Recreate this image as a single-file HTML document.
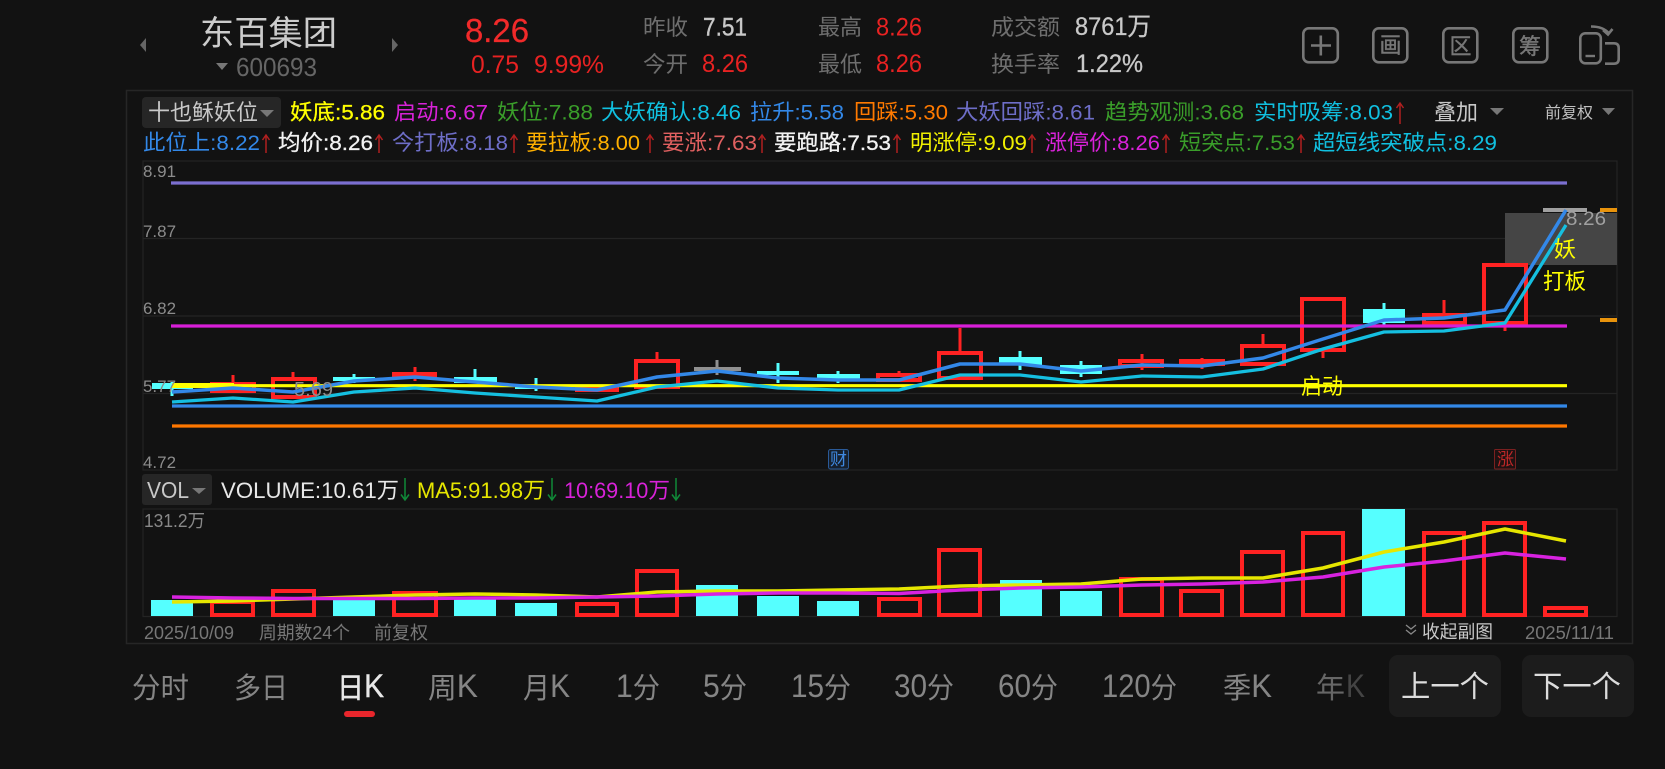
<!DOCTYPE html>
<html><head><meta charset="utf-8"><title>东百集团 600693</title>
<style>
html,body{margin:0;padding:0;background:#121212;width:1665px;height:769px;overflow:hidden}
svg{display:block}
text{font-family:"Liberation Sans","Noto Sans CJK SC",sans-serif}
</style></head><body>
<svg xmlns="http://www.w3.org/2000/svg" width="1665" height="769" viewBox="0 0 1665 769">
<rect width="1665" height="769" fill="#121212"/>

<!-- header -->
<path d="M140 45l6-7v14z M398 45l-6-7v14z" fill="#666"/>
<text x="200" y="45" font-size="34" fill="#cccccc" textLength="137" lengthAdjust="spacingAndGlyphs">东百集团</text>
<path d="M216 63h12l-6 7z" fill="#777"/>
<text x="236" y="76" font-size="26" fill="#666" textLength="81" lengthAdjust="spacingAndGlyphs">600693</text>
<text x="465" y="42" font-size="33" fill="#f12a2a" stroke="#f12a2a" stroke-width=".3" textLength="64" lengthAdjust="spacingAndGlyphs">8.26</text>
<text x="471" y="73" font-size="25" fill="#e82222" textLength="48" lengthAdjust="spacingAndGlyphs">0.75</text>
<text x="534" y="73" font-size="25" fill="#e82222" textLength="70" lengthAdjust="spacingAndGlyphs">9.99%</text>

<g font-size="22" fill="#6e6e6e">
<text x="643" y="35" textLength="45" lengthAdjust="spacingAndGlyphs">昨收</text>
<text x="643" y="72" textLength="45" lengthAdjust="spacingAndGlyphs">今开</text>
<text x="818" y="35" textLength="44" lengthAdjust="spacingAndGlyphs">最高</text>
<text x="818" y="72" textLength="44" lengthAdjust="spacingAndGlyphs">最低</text>
<text x="991" y="35" textLength="69" lengthAdjust="spacingAndGlyphs">成交额</text>
<text x="991" y="72" textLength="69" lengthAdjust="spacingAndGlyphs">换手率</text>
</g>
<g font-size="25">
<text x="703" y="35.500" fill="#c8c8c8" stroke="#c8c8c8" stroke-width=".4" textLength="44" lengthAdjust="spacingAndGlyphs">7.51</text>
<text x="702" y="72" fill="#e82222" textLength="46" lengthAdjust="spacingAndGlyphs">8.26</text>
<text x="876" y="35.500" fill="#e82222" textLength="46" lengthAdjust="spacingAndGlyphs">8.26</text>
<text x="876" y="72" fill="#e82222" textLength="46" lengthAdjust="spacingAndGlyphs">8.26</text>
<text x="1075" y="35" fill="#c8c8c8" stroke="#c8c8c8" stroke-width=".3" textLength="76" lengthAdjust="spacingAndGlyphs">8761万</text>
<text x="1076" y="72" fill="#c8c8c8" stroke="#c8c8c8" stroke-width=".3" textLength="67" lengthAdjust="spacingAndGlyphs">1.22%</text>
</g>

<!-- tool icons -->
<g fill="none" stroke="#777" stroke-width="2.600">
<rect x="1303.300" y="28.300" width="34.500" height="34" rx="5.500"/>
<rect x="1373.300" y="28.300" width="34" height="34" rx="5.500"/>
<rect x="1443.300" y="28.300" width="34" height="34" rx="5.500"/>
<rect x="1513.300" y="28.300" width="34" height="34" rx="5.500"/>
<path d="M1311 45.500h20M1320.800 35.500v20"/>
<rect x="1580.300" y="33.300" width="20.500" height="30" rx="5"/>
<path d="M1585.500 56h9.500" stroke-width="2.400"/>
<path d="M1591 26.500c7 0 14 2 18 7M1603 30l5 4.500 4.500-5.500"/>
<path d="M1605 43.300h9q4.700 0 4.700 4.700v11q0 4.700-4.700 4.700h-9"/>
</g>
<g fill="#777" stroke="#777" stroke-width=".4" text-anchor="middle" font-size="22">
<text x="1390.500" y="53">画</text>
<text x="1460.500" y="54">区</text>
<text x="1530" y="54">筹</text>
</g>

<!-- panel -->
<rect x="126.500" y="90.500" width="1506" height="553" fill="none" stroke="#262626" stroke-width="1.500"/>
<rect x="142" y="97" width="139" height="31" rx="4" fill="#262626"/>
<text x="148" y="120" font-size="22" fill="#c8c8c8" textLength="110" lengthAdjust="spacingAndGlyphs">十也稣妖位</text>
<path d="M260 110h14l-7 7z" fill="#777"/>

<g font-size="21.500" stroke-width=".3">
<text x="290" y="119.500" fill="#ffff00" stroke="#ffff00" textLength="95" lengthAdjust="spacingAndGlyphs">妖底:5.86</text>
<text x="394" y="119.500" fill="#d822d8" textLength="94" lengthAdjust="spacingAndGlyphs">启动:6.67</text>
<text x="497" y="119.500" fill="#3a9e2a" textLength="96" lengthAdjust="spacingAndGlyphs">妖位:7.88</text>
<text x="601" y="119.500" fill="#10c0e0" textLength="140" lengthAdjust="spacingAndGlyphs">大妖确认:8.46</text>
<text x="750" y="119.500" fill="#3388e8" textLength="94" lengthAdjust="spacingAndGlyphs">拉升:5.58</text>
<text x="854" y="119.500" fill="#ff7a00" textLength="94" lengthAdjust="spacingAndGlyphs">回踩:5.30</text>
<text x="956" y="119.500" fill="#6e6ec8" textLength="139" lengthAdjust="spacingAndGlyphs">大妖回踩:8.61</text>
<text x="1105" y="119.500" fill="#3a9e2a" textLength="139" lengthAdjust="spacingAndGlyphs">趋势观测:3.68</text>
<text x="1254" y="119.500" fill="#10c0e0" textLength="139" lengthAdjust="spacingAndGlyphs">实时吸筹:8.03</text>

<text x="143" y="150" fill="#3388e8" textLength="117" lengthAdjust="spacingAndGlyphs">此位上:8.22</text>
<text x="278" y="150" fill="#f2f2f2" stroke="#f2f2f2" textLength="95" lengthAdjust="spacingAndGlyphs">均价:8.26</text>
<text x="392" y="150" fill="#6e6ec8" textLength="116" lengthAdjust="spacingAndGlyphs">今打板:8.18</text>
<text x="526" y="150" fill="#ffb000" textLength="114" lengthAdjust="spacingAndGlyphs">要拉板:8.00</text>
<text x="662" y="150" fill="#e06060" textLength="95" lengthAdjust="spacingAndGlyphs">要涨:7.63</text>
<text x="774" y="150" fill="#f2f2f2" stroke="#f2f2f2" textLength="117" lengthAdjust="spacingAndGlyphs">要跑路:7.53</text>
<text x="910" y="150" fill="#f0f000" textLength="117" lengthAdjust="spacingAndGlyphs">明涨停:9.09</text>
<text x="1045" y="150" fill="#d822d8" textLength="115" lengthAdjust="spacingAndGlyphs">涨停价:8.26</text>
<text x="1179" y="150" fill="#3a9e2a" textLength="116" lengthAdjust="spacingAndGlyphs">短突点:7.53</text>
<text x="1313" y="150" fill="#10c0e0" textLength="184" lengthAdjust="spacingAndGlyphs">超短线突破点:8.29</text>
</g>
<g fill="none" stroke="#b02020" stroke-width="1.500">
<path d="M1400 103v21M1396.500 108l3.500-5 3.500 5"/>
<path d="M266 135v18M262.500 140l3.500-5 3.500 5M379 135v18M375.500 140l3.500-5 3.500 5M514 135v18M510.500 140l3.500-5 3.500 5M650 135v18M646.500 140l3.500-5 3.500 5M762 135v18M758.500 140l3.500-5 3.500 5M897 135v18M893.500 140l3.500-5 3.500 5M1032 135v18M1028.500 140l3.500-5 3.500 5M1166 135v18M1162.500 140l3.500-5 3.500 5M1301 135v18M1297.500 140l3.500-5 3.500 5"/>
</g>
<text x="1434" y="120" font-size="22" fill="#c8c8c8" textLength="44" lengthAdjust="spacingAndGlyphs">叠加</text>
<path d="M1490 108h14l-7 7zM1602 108h13l-6.500 7z" fill="#777"/>
<text x="1545" y="118" font-size="16" fill="#c0c0c0" textLength="48" lengthAdjust="spacingAndGlyphs">前复权</text>

<!-- main plot grid -->
<g fill="none" stroke="#242424" stroke-width="1.200">
<rect x="143" y="161" width="1474" height="309"/>
<path d="M143 238.500H1617M143 316H1617M143 393.500H1617"/>
<rect x="143" y="509" width="1474" height="107.500"/>
</g>

<!-- translucent box -->
<rect x="1505" y="213" width="112" height="52" fill="#454545"/>

<!-- candles -->
<g fill="#55ffff">
<rect x="152" y="383" width="41" height="6"/><rect x="170.500" y="382" width="3" height="14"/>
<rect x="333" y="377" width="42" height="4"/><rect x="352.500" y="374" width="3" height="9"/>
<rect x="454" y="377" width="43" height="6"/><rect x="473.500" y="369" width="3" height="9"/>
<rect x="515" y="386" width="42" height="3"/><rect x="534.500" y="378" width="3" height="13"/>
<rect x="757" y="371" width="42" height="4"/><rect x="776.500" y="363" width="3" height="20"/>
<rect x="817" y="374" width="43" height="5"/><rect x="836.500" y="371" width="3" height="12"/>
<rect x="999" y="357" width="43" height="8"/><rect x="1018.500" y="351" width="3" height="19"/>
<rect x="1060" y="365" width="42" height="9"/><rect x="1079.500" y="361" width="3" height="16"/>
<rect x="1363" y="309" width="42" height="14"/><rect x="1382.500" y="303" width="3" height="24"/>
</g>
<g fill="#909090">
<rect x="694" y="367" width="47" height="4"/><rect x="715.500" y="360" width="3" height="15"/>
<rect x="1543" y="208" width="44" height="4" fill="#a0a0a0"/>
</g>
<g fill="#ff2222">
<rect x="231.500" y="375" width="3" height="7"/>
<rect x="291.500" y="372" width="3" height="5"/>
<rect x="392" y="372" width="45" height="6"/><rect x="413.500" y="367" width="3" height="14"/>
<rect x="595.500" y="388" width="3" height="4"/>
<rect x="655.500" y="352" width="3" height="7"/>
<rect x="897.500" y="371" width="3" height="3"/>
<rect x="958.500" y="328" width="3" height="23"/>
<rect x="1140.500" y="354" width="3" height="16"/>
<rect x="1179" y="359" width="46" height="7"/><rect x="1200.500" y="358" width="3" height="11"/>
<rect x="1261.500" y="334" width="3" height="10"/>
<rect x="1321.500" y="352" width="3" height="6"/>
<rect x="1442.500" y="300" width="3" height="13"/>
<rect x="1503.500" y="325" width="3" height="6"/>
</g>
<g fill="none" stroke="#ff2222" stroke-width="4">
<rect x="212" y="384" width="42" height="7"/>
<rect x="273" y="379" width="42" height="18"/>
<rect x="577" y="388" width="40" height="2"/>
<rect x="636" y="361" width="42" height="26"/>
<rect x="878" y="375" width="42" height="5"/>
<rect x="939" y="353" width="42" height="25"/>
<rect x="1120" y="361" width="42" height="5"/>
<rect x="1242" y="346" width="42" height="18"/>
<rect x="1302" y="299" width="42" height="51"/>
<rect x="1424" y="315" width="41" height="8"/>
<rect x="1484" y="265" width="42" height="58"/>
</g>

<!-- horizontal indicator lines -->
<g stroke-width="3.200">
<path d="M171 183H1567" stroke="#7b6fd0"/>
<path d="M171 326H1567" stroke="#d81fd8"/>
<path d="M172 385.700H1567" stroke="#ffff00"/>
<path d="M172 406H1567" stroke="#3388e8"/>
<path d="M172 426H1567" stroke="#ff7700"/>
</g>
<rect x="172" y="383" width="62" height="5" fill="#ffff00"/>

<!-- moving lines -->
<polyline fill="none" stroke="#15bfe0" stroke-width="3.300" stroke-linejoin="round" points="172,402 233,398 293,402 354,392 415,388 475,393 536,397 597,401 657,387 717,381 778,388 838,390 899,390 960,375 1020,375 1081,382 1142,376 1202,377 1263,369 1323,349 1384,332 1444,331 1505,323 1566,225"/>
<polyline fill="none" stroke="#3388e8" stroke-width="3.500" stroke-linejoin="round" points="172,392 233,388 293,392 354,381 415,377 475,382 536,387 597,390 657,377 717,371 778,378 838,380 899,380 960,364 1020,364 1081,371 1142,365 1202,366 1263,358 1323,339 1384,320 1444,318 1505,310 1566,210"/>

<!-- overlay labels -->
<g font-size="17" fill="#8c8c8c">
<text x="143" y="177" textLength="33" lengthAdjust="spacingAndGlyphs">8.91</text>
<text x="143" y="237" textLength="33" lengthAdjust="spacingAndGlyphs">7.87</text>
<text x="143" y="314" textLength="33" lengthAdjust="spacingAndGlyphs">6.82</text>
<text x="143" y="392" textLength="33" lengthAdjust="spacingAndGlyphs">5.77</text>
<text x="143" y="468" textLength="33" lengthAdjust="spacingAndGlyphs">4.72</text>
</g>
<text x="294" y="396" font-size="20" fill="#8c8c8c" textLength="39" lengthAdjust="spacingAndGlyphs">5.69</text>
<text x="1566" y="225" font-size="19" fill="#a0a0a0" textLength="40" lengthAdjust="spacingAndGlyphs">8.26</text>
<g font-size="22" fill="#ffff00">
<text x="1554" y="257">妖</text>
<text x="1543" y="289" textLength="43" lengthAdjust="spacingAndGlyphs">打板</text>
<text x="1301" y="394" textLength="42" lengthAdjust="spacingAndGlyphs">启动</text>
</g>
<rect x="1600" y="208" width="17" height="4" fill="#e8930c"/>
<rect x="1600" y="318" width="17" height="4" fill="#e8930c"/>

<rect x="828.500" y="449.500" width="20" height="19.500" rx="2" fill="#16202e" stroke="#2a5a98"/>
<text x="830" y="465" font-size="17" fill="#3f88e0">财</text>
<rect x="1494.500" y="449.500" width="21" height="19.500" rx="1" fill="#1e1212" stroke="#7a2020"/>
<text x="1497" y="465" font-size="17" fill="#c02828">涨</text>

<!-- VOL header -->
<rect x="142" y="474" width="70" height="31" rx="3" fill="#262626"/>
<text x="147" y="498" font-size="23" fill="#c8c8c8" textLength="42" lengthAdjust="spacingAndGlyphs">VOL</text>
<path d="M192 488h14l-7 6z" fill="#777"/>
<g font-size="22">
<text x="221" y="498" fill="#e8e8e8" textLength="178" lengthAdjust="spacingAndGlyphs">VOLUME:10.61万</text>
<text x="417" y="498" fill="#e6e600" textLength="128" lengthAdjust="spacingAndGlyphs">MA5:91.98万</text>
<text x="564" y="498" fill="#d822d8" textLength="106" lengthAdjust="spacingAndGlyphs">10:69.10万</text>
</g>
<path d="M405 478v22M401 494.500l4 5.500 4-5.500M552 478v22M548 494.500l4 5.500 4-5.500M676 478v22M672 494.500l4 5.500 4-5.500" fill="none" stroke="#108a38" stroke-width="1.500"/>
<text x="144" y="527" font-size="18" fill="#888" textLength="61" lengthAdjust="spacingAndGlyphs">131.2万</text>

<!-- volume bars -->
<g fill="#55ffff">
<rect x="151" y="600" width="42" height="16"/>
<rect x="333" y="596" width="42" height="20"/>
<rect x="454" y="597" width="42" height="19"/>
<rect x="515" y="603" width="42" height="13"/>
<rect x="696" y="585" width="42" height="31"/>
<rect x="757" y="596" width="42" height="20"/>
<rect x="817" y="601" width="42" height="15"/>
<rect x="1000" y="580" width="42" height="36"/>
<rect x="1060" y="591" width="42" height="25"/>
<rect x="1362" y="509" width="43" height="107"/>
</g>
<g fill="none" stroke="#ff2222" stroke-width="4">
<rect x="212" y="602" width="41" height="13"/>
<rect x="273" y="591" width="41" height="24"/>
<rect x="394" y="593" width="42" height="22"/>
<rect x="577" y="604" width="40" height="11"/>
<rect x="637" y="571" width="40" height="44"/>
<rect x="879" y="599" width="41" height="16"/>
<rect x="939" y="550" width="41" height="65"/>
<rect x="1121" y="579" width="41" height="36"/>
<rect x="1181" y="591" width="41" height="24"/>
<rect x="1242" y="552" width="41" height="63"/>
<rect x="1303" y="533" width="40" height="82"/>
<rect x="1424" y="533" width="40" height="82"/>
<rect x="1484" y="523" width="41" height="92"/>
<rect x="1545" y="608" width="41" height="7"/>
</g>
<polyline fill="none" stroke="#e6e600" stroke-width="3.500" stroke-linejoin="round" points="172,602 233,601 293,599 354,597 415,595 475,594 536,595 597,597 657,592 717,591 778,591 838,590 899,589 960,586 1020,585 1081,584 1142,579 1202,578 1263,578 1323,568 1384,552 1444,542 1505,529 1566,541"/>
<polyline fill="none" stroke="#d822e0" stroke-width="3.500" stroke-linejoin="round" points="172,597 233,598 293,598.500 354,598.500 415,598.500 475,598 536,598 597,597 657,596 717,594 778,593 838,593 899,593.500 960,590 1020,588 1081,587 1142,585 1202,584 1263,582 1323,577 1384,567 1444,561 1505,553 1566,559"/>

<!-- footer of panel -->
<g font-size="18" fill="#777">
<text x="144" y="639" textLength="90" lengthAdjust="spacingAndGlyphs">2025/10/09</text>
<text x="259" y="639" textLength="91" lengthAdjust="spacingAndGlyphs">周期数24个</text>
<text x="374" y="639" textLength="54" lengthAdjust="spacingAndGlyphs">前复权</text>
<text x="1525" y="639" textLength="89" lengthAdjust="spacingAndGlyphs">2025/11/11</text>
</g>
<path d="M1406 625l5 4 5-4M1406 630l5 4 5-4" fill="none" stroke="#888" stroke-width="1.300"/>
<text x="1422" y="638" font-size="18" fill="#c8c8c8" textLength="71" lengthAdjust="spacingAndGlyphs">收起副图</text>

<!-- tabs -->
<g font-size="29" fill="#858585">
<text x="132" y="698" textLength="57" lengthAdjust="spacingAndGlyphs">分时</text>
<text x="234" y="698" textLength="54" lengthAdjust="spacingAndGlyphs">多日</text>
<text x="337" y="698" fill="#e8e8e8" stroke="#e8e8e8" stroke-width=".4" textLength="47" lengthAdjust="spacingAndGlyphs">日<tspan font-size="32" dy="-1">K</tspan></text>
<text x="428" y="698" textLength="50" lengthAdjust="spacingAndGlyphs">周<tspan font-size="32" dy="-1">K</tspan></text>
<text x="523" y="698" textLength="47" lengthAdjust="spacingAndGlyphs">月<tspan font-size="32" dy="-1">K</tspan></text>
<text x="616" y="698" textLength="44" lengthAdjust="spacingAndGlyphs"><tspan font-size="32" dy="-1">1</tspan><tspan dy="1">分</tspan></text>
<text x="703" y="698" textLength="44" lengthAdjust="spacingAndGlyphs"><tspan font-size="32" dy="-1">5</tspan><tspan dy="1">分</tspan></text>
<text x="791" y="698" textLength="60" lengthAdjust="spacingAndGlyphs"><tspan font-size="32" dy="-1">15</tspan><tspan dy="1">分</tspan></text>
<text x="894" y="698" textLength="60" lengthAdjust="spacingAndGlyphs"><tspan font-size="32" dy="-1">30</tspan><tspan dy="1">分</tspan></text>
<text x="998" y="698" textLength="60" lengthAdjust="spacingAndGlyphs"><tspan font-size="32" dy="-1">60</tspan><tspan dy="1">分</tspan></text>
<text x="1102" y="698" textLength="75" lengthAdjust="spacingAndGlyphs"><tspan font-size="32" dy="-1">120</tspan><tspan dy="1">分</tspan></text>
<text x="1223" y="698" textLength="49" lengthAdjust="spacingAndGlyphs">季<tspan font-size="32" dy="-1">K</tspan></text>
<text x="1316" y="698" fill="#666" textLength="29" lengthAdjust="spacingAndGlyphs">年</text>
<text x="1346" y="697" font-size="32" fill="#444" textLength="19" lengthAdjust="spacingAndGlyphs">K</text>
</g>
<rect x="344" y="711" width="31" height="6" rx="3" fill="#e8262c"/>
<rect x="1389" y="655" width="112" height="62" rx="9" fill="#1c1c1c"/>
<rect x="1522" y="655" width="112" height="62" rx="9" fill="#1c1c1c"/>
<text x="1401" y="697" font-size="30" fill="#dcdcdc" textLength="88" lengthAdjust="spacingAndGlyphs">上一个</text>
<text x="1533" y="697" font-size="30" fill="#dcdcdc" textLength="88" lengthAdjust="spacingAndGlyphs">下一个</text>
</svg>
</body></html>
